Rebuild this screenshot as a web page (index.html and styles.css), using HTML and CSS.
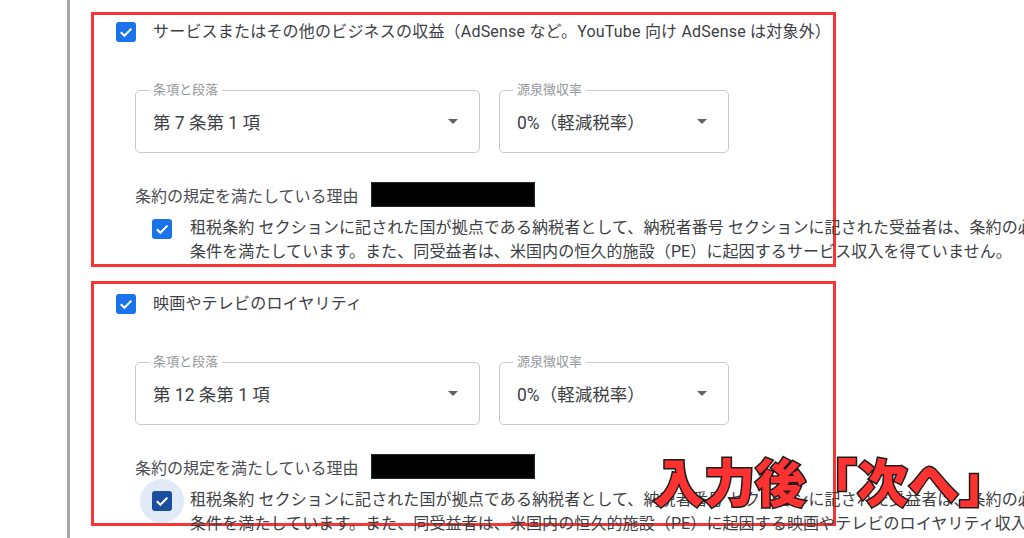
FILE: index.html
```html
<!DOCTYPE html>
<html lang="ja">
<head>
<meta charset="utf-8">
<title>租税条約</title>
<link rel="stylesheet" href="styles.css">
</head>
<body>
<div class="page">
  <div class="content">
    <section class="treaty treaty--first">
      <div class="head">
        <span class="cb"><svg viewBox="0 0 20 20" width="20" height="20"><path d="M4.8 10.2 L8.4 13.8 L15.4 6.6" fill="none" stroke="#fff" stroke-width="2"/></svg></span>
        <span class="head-text">サービスまたはその他のビジネスの収益（AdSense など。YouTube 向け AdSense は対象外）</span>
      </div>
      <div class="fields">
        <div class="field field--wide">
          <span class="field-label">条項と段落</span>
          <span class="field-value">第 7 条第 1 項</span>
          <span class="caret"></span>
        </div>
        <div class="field field--narrow">
          <span class="field-label">源泉徴収率</span>
          <span class="field-value">0%（軽減税率）</span>
          <span class="caret"></span>
        </div>
      </div>
      <div class="reason">
        <span class="reason-text">条約の規定を満たしている理由</span>
        <span class="redact"></span>
      </div>
      <div class="claim">
        <span class="cb cb--small"><svg viewBox="0 0 20 20" width="20" height="20"><path d="M4.8 10.2 L8.4 13.8 L15.4 6.6" fill="none" stroke="#fff" stroke-width="2"/></svg></span>
        <div class="claim-text">
          <div class="line">租税条約 セクションに記された国が拠点である納税者として、納税者番号 セクションに記された受益者は、条約の必要</div>
          <div class="line">条件を満たしています。また、同受益者は、米国内の恒久的施設（PE）に起因するサービス収入を得ていません。</div>
        </div>
      </div>
    </section>

    <section class="treaty treaty--second">
      <div class="head">
        <span class="cb"><svg viewBox="0 0 20 20" width="20" height="20"><path d="M4.8 10.2 L8.4 13.8 L15.4 6.6" fill="none" stroke="#fff" stroke-width="2"/></svg></span>
        <span class="head-text">映画やテレビのロイヤリティ</span>
      </div>
      <div class="fields">
        <div class="field field--wide">
          <span class="field-label">条項と段落</span>
          <span class="field-value">第 12 条第 1 項</span>
          <span class="caret"></span>
        </div>
        <div class="field field--narrow">
          <span class="field-label">源泉徴収率</span>
          <span class="field-value">0%（軽減税率）</span>
          <span class="caret"></span>
        </div>
      </div>
      <div class="reason">
        <span class="reason-text">条約の規定を満たしている理由</span>
        <span class="redact"></span>
      </div>
      <div class="claim">
        <span class="halo"><span class="cb cb--focus"><svg viewBox="0 0 20 20" width="20" height="20"><path d="M4.8 10.2 L8.4 13.8 L15.4 6.6" fill="none" stroke="#fff" stroke-width="2"/></svg></span></span>
        <div class="claim-text">
          <div class="line">租税条約 セクションに記された国が拠点である納税者として、納税者番号 セクションに記された受益者は、条約の必要</div>
          <div class="line">条件を満たしています。また、同受益者は、米国内の恒久的施設（PE）に起因する映画やテレビのロイヤリティ収入を得ていません。</div>
        </div>
      </div>
    </section>
  </div>
  <div class="overlay">入力後「次へ」</div>
</div>
</body>
</html>
```

FILE: styles.css
```css
html, body {
  margin: 0;
  padding: 0;
  background: #ffffff;
}
body {
  width: 1024px;
  height: 538px;
  overflow: hidden;
  font-family: Roboto, "Noto Sans CJK JP", sans-serif;
  color: #3c4043;
}
.page {
  position: relative;
  width: 1024px;
  height: 538px;
  overflow: hidden;
}
.content {
  margin-left: 67px;
  border-left: 3px solid #a3a5a8;
  height: 538px;
  padding-left: 21px;
  padding-top: 12px;
  box-sizing: border-box;
}
.treaty {
  width: 745px;
  box-sizing: border-box;
  border: 3px solid #f73535;
  padding-left: 22px;
}
.treaty--first {
  height: 255px;
  padding-top: 7px;
}
.treaty--second {
  height: 245px;
  margin-top: 14px;
  padding-top: 10px;
}
.head {
  display: flex;
  align-items: center;
  height: 20px;
  gap: 17px;
}
.cb {
  width: 20px;
  height: 20px;
  border-radius: 3px;
  background: #1a73e8;
  display: flex;
  align-items: center;
  justify-content: center;
  flex: none;
}
.cb svg { display: block; }
.cb--focus { background: #1b4e9e; }
.head-text {
  font-size: 16px;
  line-height: 20px;
  letter-spacing: 0.2px;
  white-space: nowrap;
  color: #3c4043;
}
.fields {
  display: flex;
  gap: 19px;
  margin-left: 19px;
  margin-top: 48px;
}
.field {
  position: relative;
  height: 63px;
  box-sizing: border-box;
  border: 1px solid #c8c9cb;
  border-radius: 5px;
  display: flex;
  align-items: center;
  padding: 0 21px 0 17px;
}
.field--wide { width: 345px; }
.field--narrow { width: 230px; }
.field-label {
  position: absolute;
  top: -9px;
  left: 13px;
  padding: 0 4px;
  background: #fff;
  font-size: 13px;
  line-height: 16px;
  color: #95999e;
}
.field-value {
  font-size: 17.5px;
  color: #3c4043;
  white-space: nowrap;
}
.caret {
  margin-left: auto;
  width: 0;
  height: 0;
  border-left: 5px solid transparent;
  border-right: 5px solid transparent;
  border-top: 5px solid #5f6368;
}
.reason {
  display: flex;
  align-items: center;
  gap: 12px;
  margin-left: 19px;
  margin-top: 29px;
  height: 25px;
}
.reason-text {
  font-size: 16px;
  color: #4a4d51;
  white-space: nowrap;
}
.redact {
  width: 164px;
  height: 25px;
  box-sizing: border-box;
  background: #000;
  border: 1px solid #1e2e1e;
}
.claim {
  display: flex;
  align-items: flex-start;
  margin-left: 36px;
  margin-top: 9px;
  gap: 18px;
}
.claim .cb { margin-top: 3px; }
.halo {
  position: relative;
  width: 20px;
  height: 20px;
  margin-top: 3px;
  flex: none;
}
.halo::before {
  content: "";
  position: absolute;
  left: -12px;
  top: -12px;
  width: 44px;
  height: 44px;
  border-radius: 50%;
  background: #e1eaf7;
}
.halo .cb {
  position: relative;
  margin-top: 0;
}
.claim-text {
  font-size: 16px;
  letter-spacing: 0.1px;
  line-height: 24px;
  color: #3c4043;
  white-space: nowrap;
}
.overlay {
  position: absolute;
  left: 653px;
  top: 455px;
  font-family: "Noto Sans CJK JP", sans-serif;
  font-weight: 900;
  font-size: 51px;
  line-height: 1;
  color: #ff3232;
  -webkit-text-stroke: 3px #1c1c1c;
  paint-order: stroke fill;
  white-space: nowrap;
}
```
